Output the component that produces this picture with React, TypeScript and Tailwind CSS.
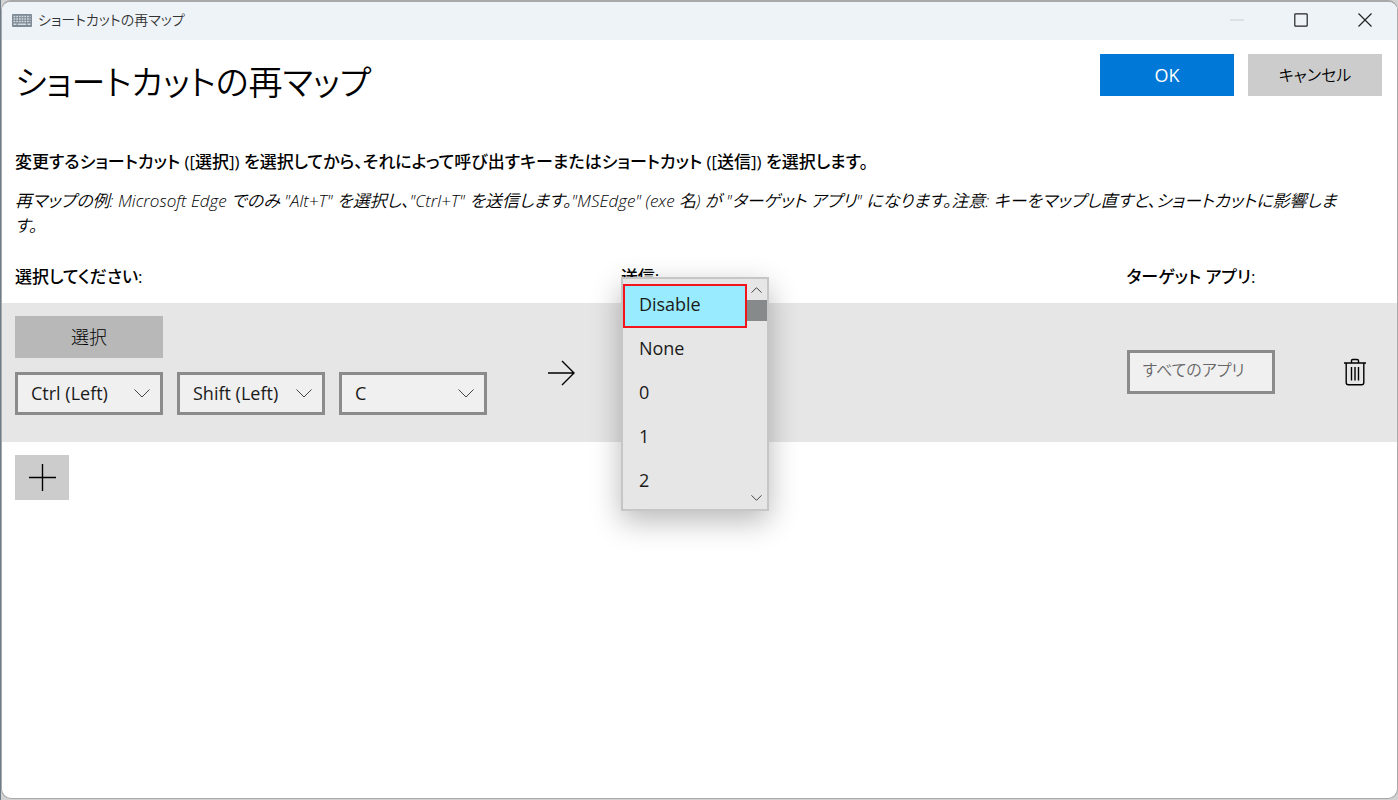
import { useState, type ReactNode } from "react";

const keys = ["Disable", "None", "0", "1", "2"];

const shortcut = [
  { id: "key-1", label: "修飾キー 1", value: "Ctrl (Left)" },
  { id: "key-2", label: "修飾キー 2", value: "Shift (Left)" },
  { id: "key-3", label: "キー", value: "C" },
];

function Chevron({ className, up = false }: { className: string; up?: boolean }) {
  return (
    <svg viewBox="0 0 16 9" className={className} fill="none" stroke="currentColor" aria-hidden="true">
      <path d={up ? "M0.5 8.5 8 1l7.5 7.5" : "M0.5 0.5 8 8l7.5-7.5"} vectorEffect="non-scaling-stroke" />
    </svg>
  );
}

function KeyboardIcon() {
  return (
    <svg viewBox="0 0 20 13" className="h-[13px] w-5" aria-hidden="true">
      <rect width="20" height="13" rx="1" fill="#7d8994" />
      <g stroke="#d3dae0" strokeWidth="1.4">
        <path d="M1.5 2.5h17M1.5 5h17M1.5 7.5h17" strokeDasharray="1.8 0.9" />
        <path d="M1.5 10.3h3M5.8 10.3h8.4M15.5 10.3h3" />
      </g>
    </svg>
  );
}

function TrashIcon() {
  return (
    <svg viewBox="0 0 22 28" className="h-7 w-[22px]" fill="none" stroke="black" strokeWidth="1.4" aria-hidden="true">
      <path d="M0 5h22M7.5 5V2.8q0-1.3 1.3-1.3h4.4q1.3 0 1.3 1.3V5" />
      <path d="M2.2 5v19.5q0 2.2 2.2 2.2h13.2q2.2 0 2.2-2.2V5" />
      <path d="M7.5 9v13.5M11 9v13.5M14.5 9v13.5" />
    </svg>
  );
}

function CaptionButton({ label, children }: { label: string; children: ReactNode }) {
  return (
    <button type="button" aria-label={label} className="flex h-full w-16 items-center justify-center text-[#222]">
      <svg viewBox="0 0 14 14" className="size-3.5" fill="none" stroke="currentColor" strokeWidth="1.2" aria-hidden="true">
        {children}
      </svg>
    </button>
  );
}

function KeySelect({ id, label, value }: { id: string; label: string; value: string }) {
  return (
    <div className="relative w-[148px]">
      <select
        id={id}
        aria-label={label}
        defaultValue={value}
        className="h-[43px] w-full appearance-none border-3 border-[#8b8b8b] bg-[#f0f0f0] pb-px pl-[13px] text-lg text-[#1a1a1a] outline-none"
      >
        <option>{value}</option>
      </select>
      <Chevron className="pointer-events-none absolute top-[17px] right-[13px] h-[9px] w-4 text-[#444]" />
    </div>
  );
}

function KeyList() {
  const [selected, setSelected] = useState("Disable");

  return (
    <div className="absolute -top-[39px] left-0 z-10 flex h-[234px] w-[148px] border-2 border-[#c6c6c6] bg-[#e6e6e6] shadow-[0_10px_28px_rgba(0,0,0,0.28)]">
      <div role="listbox" aria-label="送信" className="flex flex-1 flex-col pt-[5px]">
        {keys.map((key) => (
          <button
            key={key}
            type="button"
            role="option"
            aria-selected={key === selected}
            onClick={() => setSelected(key)}
            className="h-11 border-2 border-transparent pb-1 pl-[14px] text-left text-lg text-[#1a1a1a] aria-selected:border-[#f4141c] aria-selected:bg-[#99ebff]"
          >
            {key}
          </button>
        ))}
      </div>
      <div className="flex w-5 flex-col items-center pt-2 pb-2 text-[#444]">
        <Chevron up className="h-[6px] w-[11px]" />
        <div className="mt-[7px] h-[21px] w-full bg-[#868a8a]" />
        <Chevron className="mt-auto h-[6px] w-[11px]" />
      </div>
    </div>
  );
}

export default function App() {
  return (
    <div className="flex min-h-screen border-l border-[#6d7c89] bg-[#d2d2d2] pb-px font-['Open_Sans','Noto_Sans_CJK_JP',sans-serif] text-black [font-feature-settings:'palt']">
      <div className="flex flex-1 flex-col overflow-hidden rounded-[10px] border border-t-2 border-[#a9a9a9] bg-white">
        <header className="flex h-[38px] items-center justify-between bg-[#eef3f8] pb-[2px] pl-[10px]">
          <div className="flex items-center gap-[6px] text-sm text-[#333]">
            <KeyboardIcon />
            <span className="font-[350]">ショートカットの再マップ</span>
          </div>
          <div className="flex h-full">
            <CaptionButton label="最小化">
              <path d="M0 7h14" stroke="#c9ced2" />
            </CaptionButton>
            <CaptionButton label="最大化">
              <rect x="0.8" y="0.8" width="12.4" height="12.4" rx="0.8" />
            </CaptionButton>
            <CaptionButton label="閉じる">
              <path d="M0.5 0.5l13 13M13.5 0.5l-13 13" />
            </CaptionButton>
          </div>
        </header>

        <main className="pt-[14px]">
          <div className="flex items-start justify-between pr-[15px] pl-[13px]">
            <h1 className="text-[34px] leading-[56px] font-[350]">ショートカットの再マップ</h1>
            <div className="flex gap-[14px]">
              <button type="button" className="h-[42px] w-[134px] bg-[#0078d7] text-lg text-white">
                OK
              </button>
              <button type="button" className="h-[42px] w-[134px] bg-[#cccccc] text-base font-[350]">
                キャンセル
              </button>
            </div>
          </div>

          <p className="mt-[39px] pl-[13px] text-[17px] leading-[26px] font-medium">
            変更するショートカット ([選択]) を選択してから、それによって呼び出すキーまたはショートカット ([送信]) を選択します。
          </p>
          <p className="mt-[13px] pl-[13px] text-[17px] leading-[25px] font-[350] italic">
            再マップの例: Microsoft Edge でのみ "Alt+T" を選択し、"Ctrl+T" を送信します。"MSEdge" (exe 名) が "ターゲット
            アプリ" になります。注意: キーをマップし直すと、ショートカットに影響しま
            <br />
            す。
          </p>

          <div className="mt-[26px] grid grid-cols-[605fr_505fr_270fr] pb-[13px] pl-[13px] text-[17px] leading-[26px] font-medium">
            <h2>選択してください:</h2>
            <h2>送信:</h2>
            <h2>
              <label htmlFor="target-app">ターゲット アプリ:</label>
            </h2>
          </div>

          <div className="grid grid-cols-[605fr_505fr_270fr] bg-[#e6e6e6] pt-[13px] pb-[27px] pl-[13px]">
            <div className="flex items-center justify-between pr-[46px]">
              <div className="flex flex-col gap-[14px]">
                <button type="button" className="h-[42px] w-[148px] bg-[#b8b8b8] text-lg font-light">
                  選択
                </button>
                <div className="flex gap-[14px]">
                  {shortcut.map((item) => (
                    <KeySelect key={item.id} {...item} />
                  ))}
                </div>
              </div>
              <svg viewBox="0 0 27 26" className="mt-[14px] h-[26px] w-[27px]" fill="none" stroke="black" strokeWidth="1.4" aria-hidden="true">
                <path d="M0 13h26M14 1l12 12-12 12" />
              </svg>
            </div>

            <div className="relative">
              <KeyList />
            </div>

            <div className="flex items-center justify-between pt-[13px] pr-[31px]">
              <input
                id="target-app"
                type="text"
                placeholder="すべてのアプリ"
                className="h-11 w-[148px] border-3 border-[#8b8b8b] bg-[#f0f0f0] px-[13px] pb-1 text-base font-[350] outline-none placeholder:text-[#666]"
              />
              <button type="button" aria-label="削除">
                <TrashIcon />
              </button>
            </div>
          </div>

          <button type="button" aria-label="追加" className="mt-[13px] ml-[13px] flex h-[45px] w-[54px] items-center justify-center bg-[#cccccc]">
            <svg viewBox="0 0 27 27" className="size-[27px]" stroke="black" strokeWidth="1.4" aria-hidden="true">
              <path d="M0 13.5h27M13.5 0v27" />
            </svg>
          </button>
        </main>
      </div>
    </div>
  );
}
